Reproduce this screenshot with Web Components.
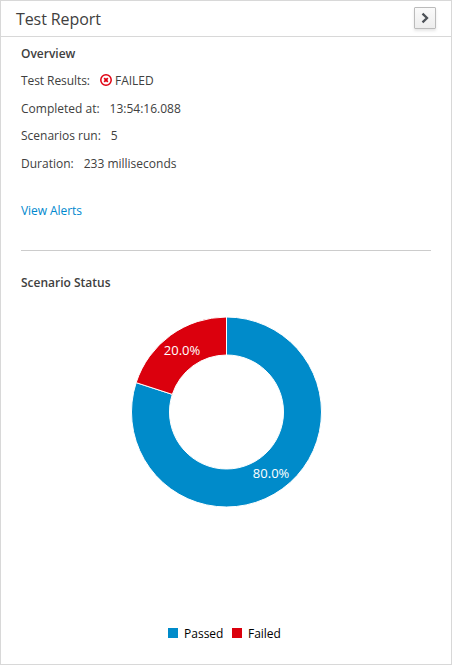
<!DOCTYPE html>
<html lang="en">
<head>
<meta charset="utf-8">
<title>Test Report</title>
<style>
html, body { margin: 0; height: 100%; background: #fff; }
body { font: 12px/20px "Open Sans", "Noto Sans", sans-serif; color: #404040; }
</style>
</head>
<body>
<report-panel></report-panel>
<script>
function define(name, html) {
  const template = document.createElement('template');
  template.innerHTML = html;
  customElements.define(name, class extends HTMLElement {
    constructor() {
      super();
      this.attachShadow({ mode: 'open' }).append(template.content.cloneNode(true));
    }
  });
}

define('collapse-button', `
<style>
:host { display: block; }
button { display: flex; align-items: center; justify-content: center; box-sizing: border-box;
  width: 22px; height: 22px; padding: 0; border: 1px solid #bbb; border-radius: 1px;
  background: linear-gradient(#fafafa, #ededed); box-shadow: 0 2px 3px rgba(3,3,3,.1); }
svg { display: block; }
</style>
<button aria-label="Collapse"><svg width="8" height="12" viewBox="0 0 8 12"><path d="M1.5 1.6 6 6 1.5 10.4" fill="none" stroke="#4d5258" stroke-width="2.3"/></svg></button>`);

define('panel-header', `
<style>
:host { display: flex; justify-content: space-between; align-items: flex-start; box-sizing: border-box;
  height: 36px; padding: 6px 15px 0; border-bottom: 1px solid #d8d8d8; font-size: 16px; line-height: 24px; }
.title { letter-spacing: -.09px; }
</style>
<span class="title"><slot></slot></span><collapse-button></collapse-button>`);

define('section-title', `
<style>:host { display: block; font-weight: 600; height: 20px; }</style><slot></slot>`);

define('detail-row', `
<style>
:host { display: flex; gap: 10px; height: 27.5px; }
.value { display: flex; align-items: flex-start; }
.label { letter-spacing: var(--label-spacing, 0); }
</style>
<span class="label"><slot name="label"></slot></span><span class="value"><slot></slot></span>`);

define('error-icon', `
<style>:host { display: block; width: 12px; height: 12px; margin: 3px 3px 0 0; } svg { display: block; }</style>
<svg width="12" height="12" viewBox="0 0 12 12" fill="none" stroke="#e00011"><circle cx="6" cy="6" r="5.2" stroke-width="1.5"/><path d="M4.2 4.2 7.8 7.8M7.8 4.2 4.2 7.8" stroke-width="1.8"/></svg>`);

define('alerts-link', `
<style>:host { display: block; margin-top: 20px; letter-spacing: -.07px; } a { color: #0088ce; text-decoration: none; }</style>
<a href="#"><slot></slot></a>`);

define('donut-chart', `
<style>
:host { display: block; width: 190px; height: 190px; margin: 24px auto 0; }
svg { display: block; overflow: visible; }
text { font-size: 13px; fill: #fff; text-anchor: middle; }
</style>
<svg width="191" height="190" viewBox="-95.5 -95 191 190">
<g stroke="#fff">
<path fill="#008bca" d="M0-95A95 95 0 1 1-90.35-29.36L-54.21-17.61A57 57 0 1 0 0-57Z"/>
<path fill="#db000d" d="M-90.35-29.36A95 95 0 0 1 0-95V-57A57 57 0 0 0-54.21-17.61Z"/>
</g>
<text x="44.6" y="66">80.0%</text><text x="-44.5" y="-57">20.0%</text>
</svg>`);

define('legend-item', `
<style>
:host { display: flex; align-items: center; gap: 6px; }
i { width: 10px; height: 10px; margin-bottom: 2px; background: var(--swatch); }
</style>
<i></i><span><slot></slot></span>`);

define('chart-legend', `
<style>:host { display: flex; justify-content: center; gap: 8.5px; margin-top: auto; padding: 0 3px 20px 0; color: #000; }</style>
<slot></slot>`);

define('report-panel', `
<style>
:host { display: flex; flex-direction: column; box-sizing: border-box; height: 665px; border: 1px solid #d8d8d8; }
main { flex: 1; display: flex; flex-direction: column; padding: 7px 20px 0; }
hr { width: 100%; height: 1px; margin: 29px 0 22px; border: 0; background: #ccc; }
.details { margin-top: 7px; }
</style>
<panel-header>Test Report</panel-header>
<main>
<section-title>Overview</section-title>
<div class="details">
<detail-row style="--label-spacing:-.07px"><span slot="label">Test Results:</span><error-icon></error-icon>FAILED</detail-row>
<detail-row><span slot="label">Completed at:</span>13:54:16.088</detail-row>
<detail-row><span slot="label">Scenarios run:</span>5</detail-row>
<detail-row><span slot="label">Duration:</span>233 milliseconds</detail-row>
</div>
<alerts-link>View Alerts</alerts-link>
<hr>
<section-title>Scenario Status</section-title>
<donut-chart></donut-chart>
<chart-legend><legend-item style="--swatch:#008bca">Passed</legend-item><legend-item style="--swatch:#db000d">Failed</legend-item></chart-legend>
</main>`);
</script>
</body>
</html>
